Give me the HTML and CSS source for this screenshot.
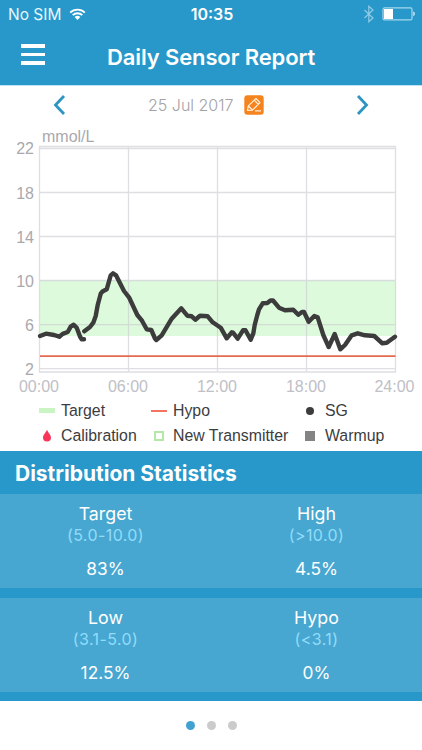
FILE: index.html
```html
<!DOCTYPE html>
<html lang="en">
<head>
  <meta charset="UTF-8">
  <title>Daily Sensor Report</title>
  <link rel="stylesheet" href="styles.css">
</head>
<body>
<header class="header">
  <div class="status">
    <span class="carrier">No SIM
      <svg class="wifi" width="17" height="13" viewBox="0 0 17 13">
        <path d="M1.2 4.6a10.4 10.4 0 0 1 14.6 0M3.7 7.2a6.8 6.8 0 0 1 9.6 0" fill="none" stroke="#fff" stroke-width="1.9"/>
        <path d="M5.6 9.1a4.1 4.1 0 0 1 5.8 0L8.5 12z" fill="#fff"/>
      </svg>
    </span>
    <span class="time">10:35</span>
    <span class="power">
      <svg width="12" height="18" viewBox="0 0 12 18">
        <path d="M1.5 5l8.5 8-4.2 3.8V1.2L10 5l-8.5 8" fill="none" stroke="#8fcbe6" stroke-width="1.2"/>
      </svg>
      <svg width="34" height="14" viewBox="0 0 34 14">
        <rect x="1" y=".9" width="29" height="12" rx="1.5" fill="none" stroke="#a5d8ee" stroke-width="1.2"/>
        <rect x="2" y="2" width="9" height="10" fill="#fff"/>
        <path d="M31.3 4.6c2 .4 2 4.2 0 4.6z" fill="#d5eef8"/>
      </svg>
    </span>
  </div>
  <div class="nav">
    <div class="menu"><i></i><i></i><i></i></div>
    <h1>Daily Sensor Report</h1>
  </div>
</header>

<div class="date">
  <svg width="14" height="22" viewBox="0 0 14 22"><path d="M12 2L3.5 11l8.5 9" fill="none" stroke="#2e94c2" stroke-width="2.8"/></svg>
  <p>
    <span>25 Jul 2017</span>
    <svg width="20" height="20" viewBox="0 0 20 20">
      <rect x=".3" y=".3" width="19.4" height="19.4" rx="3" fill="#f5841f"/>
      <path d="M3.5 15.5l.8-4.6L12 3.5l4 4.2-7.5 7.5zM4.4 11l4 4M10.3 5.2l4 4.1M11 15.8h6" fill="none" stroke="#ffeed8" stroke-width="1.2" stroke-linejoin="round"/>
    </svg>
  </p>
  <svg width="14" height="22" viewBox="0 0 14 22"><path d="M2 2l8.5 9L2 20" fill="none" stroke="#2e94c2" stroke-width="2.8"/></svg>
</div>

<svg class="chart" width="422" height="275" viewBox="0 123 422 275">
  <!-- target range -->
  <rect x="40" y="280.5" width="355.5" height="55.5" fill="#defadc"/>
  <g class="grid">
    <path d="M39.5 146.5h356v225.5h-356zM40 148.5h355M40 192.5h355M40 236.5h355M40 280.5h355M40 324.6h355M40 368.7h355M128.5 147v225M217.5 147v225M306.5 147v225"/>
  </g>
  <g class="y-label">
    <text x="34" y="154">22</text>
    <text x="34" y="198.5">18</text>
    <text x="34" y="242.5">14</text>
    <text x="34" y="286.5">10</text>
    <text x="34" y="330.5">6</text>
    <text x="34" y="374.5">2</text>
  </g>
  <text class="unit" x="42" y="142">mmol/L</text>
  <g class="x-label">
    <text x="39" y="392">00:00</text>
    <text x="128" y="392">06:00</text>
    <text x="217" y="392">12:00</text>
    <text x="306" y="392">18:00</text>
    <text x="394.5" y="392">24:00</text>
  </g>
  <path d="M40 356.2h355.5" stroke="#e4694f" stroke-width="1.8"/>
  <!-- sensor glucose -->
  <g class="sg">
    <path d="M40 336L46 333.7 54 335 59.3 336.7 62.7 333.9 67.7 332 70.7 326.7 73.7 324.7 76.7 327.7 80 336.5 81.7 339.3H84"/>
    <path d="M84.3 331.3L90 327 93.3 322.7 95.7 316 97.7 305 100.7 293.7 102.5 291.5 106.7 289.3 110.7 275.3 113 273.3 116 275.3 124 291 129 297.3 137.3 315 142 320.7 146.7 329.3 151.3 330 155 338.5 156.3 340 161.7 335.3 171.7 318.7 181.3 308.3 187.3 315.7 191.7 316.3 195.3 319.7 200 315.7 207.7 316.3 212.7 322.3 220.7 327.7 226.7 338.3 231.7 332.3 233 332.7 237.7 338.7 243 330.3 245.5 330.3 250.7 339.7 253.3 333.3 254.7 325 257.3 315 259 309.3 262.7 303.3 267.3 303 270.5 300.5 273 300.5 279 307.7 285 310.3 293.3 309.7 298.3 314.7 302 312 304 312 308.7 321.7 314.3 316 317.7 317.3 323.3 335 328.7 347 334.7 334 340.3 349.3 345 345 351.7 335.3 357.7 333.3 365 335.3 374.3 336 382.3 343.3 386.7 342.7 395 336.7"/>
  </g>
</svg>

<ul class="legend">
  <li><i class="mark target"></i>Target</li>
  <li><i class="mark hypo"></i>Hypo</li>
  <li><i class="mark dot"></i>SG</li>
  <li>
    <svg class="mark drop" width="8" height="13" viewBox="0 0 8 13"><path d="M4 .5C4.6 3 8 5.8 8 8.6a4 4 0 0 1-8 0C0 5.8 3.4 3 4 .5z" fill="#f8365a"/></svg>
    Calibration
  </li>
  <li><i class="mark transmitter"></i>New Transmitter</li>
  <li><i class="mark warmup"></i>Warmup</li>
</ul>

<section class="stats">
  <h2>Distribution Statistics</h2>
  <div class="row">
    <div class="cell"><h3>Target</h3><small>(5.0-10.0)</small><b>83%</b></div>
    <div class="cell"><h3>High</h3><small>(&gt;10.0)</small><b>4.5%</b></div>
  </div>
  <div class="row">
    <div class="cell"><h3>Low</h3><small>(3.1-5.0)</small><b>12.5%</b></div>
    <div class="cell"><h3>Hypo</h3><small>(&lt;3.1)</small><b>0%</b></div>
  </div>
</section>

<div class="pager"><i class="on"></i><i></i><i></i></div>
</body>
</html>
```
FILE: styles.css
```css
*{
    margin: 0;
    padding: 0;
    box-sizing: border-box;
}
body{
    width: 422px;
    height: 750px;
    overflow: hidden;
    background: #fff;
    font-family: Inter, sans-serif;
}
svg{
    display: block;
    flex-shrink: 0;
}
.header{
    height: 85px;
    background: #2798c9;
    color: #fff;
}
.status{
    height: 28px;
    display: grid;
    grid-template-columns: 1fr auto 1fr;
    align-items: center;
    padding: 0 6px 0 8px;
    font-size: 15.5px;
}
.carrier{
    display: flex;
    align-items: center;
    gap: 8px;
    color: #e6f6fc;
}
.time{
    font-weight: 600;
    font-size: 16px;
}
.power{
    display: flex;
    align-items: center;
    justify-content: flex-end;
    gap: 7px;
}
.nav{
    height: 57px;
    display: flex;
    align-items: center;
    padding-left: 21px;
}
.menu{
    width: 24px;
    display: flex;
    flex-direction: column;
    gap: 5px;
    margin: -4px 62px 0 0;
}
.menu i{
    height: 3.5px;
    background: #fff;
}
.nav h1{
    font-size: 22px;
    font-weight: 600;
    line-height: 56px;
    letter-spacing: -.12px;
    white-space: nowrap;
}
.date{
    height: 38px;
    display: flex;
    align-items: center;
    padding: 0 52px;
    border-top: 1px solid #bfe3f2;
}
.date p{
    width: 116px;
    display: flex;
    align-items: center;
    justify-content: space-between;
    margin: 0 auto 0 82px;
    font-size: 16px;
    font-weight: 300;
    color: #a3a3a6;
    white-space: nowrap;
}
.chart text{
    font: 16px "Liberation Sans", sans-serif;
    fill: #a9a9ad;
}
.chart .y-label text{
    text-anchor: end;
}
.chart .x-label text{
    text-anchor: middle;
    fill: #c0c0c6;
}
.grid path{
    fill: none;
    stroke: #c8c8d0;
    stroke-opacity: .6;
    stroke-width: 1.3;
}
.sg path{
    fill: none;
    stroke: #3c3c3c;
    stroke-width: 4.4;
    stroke-linecap: round;
    stroke-linejoin: round;
}
.legend{
    height: 53px;
    padding-left: 39px;
    display: grid;
    grid-template-columns: 112px 152px 1fr;
    grid-template-rows: 25px 25px;
    list-style: none;
    font: 15.85px "Liberation Sans", sans-serif;
    color: #3c3c3f;
}
.legend li{
    display: flex;
    align-items: center;
    white-space: nowrap;
}
.mark{
    flex-shrink: 0;
}
.target{
    width: 16px;
    height: 5px;
    margin-right: 6px;
    background: #c9f5c4;
}
.hypo{
    width: 16px;
    height: 2px;
    margin-right: 6px;
    background: #f07563;
}
.dot{
    width: 8px;
    height: 8px;
    margin: 0 11px 0 3px;
    border-radius: 50%;
    background: #3c3c3c;
}
.drop{
    margin: 0 10px 0 4px;
}
.transmitter{
    width: 10px;
    height: 10px;
    margin: 0 9px 0 3px;
    border: 2.5px solid #b5e8a8;
}
.warmup{
    width: 10px;
    height: 10px;
    margin: 0 10px 0 2px;
    background: #848484;
}
.stats{
    height: 250px;
    background: #2798c9;
    color: #fff;
}
.stats h2{
    height: 43px;
    padding-left: 15px;
    font-size: 21px;
    font-weight: 700;
    line-height: 46px;
}
.row{
    height: 94px;
    margin-bottom: 10px;
    padding-top: 8px;
    display: grid;
    grid-template-columns: 1fr 1fr;
    background: #48a7d0;
}
.cell{
    display: flex;
    flex-direction: column;
    align-items: center;
}
.cell h3{
    font-size: 17.8px;
    font-weight: 400;
    line-height: 23px;
}
.cell small{
    font-size: 16px;
    line-height: 20px;
    letter-spacing: .4px;
    color: #91dcfb;
}
.cell b{
    margin-top: 12px;
    font-size: 17.3px;
    font-weight: 400;
    line-height: 24px;
}
.pager{
    height: 49px;
    display: flex;
    justify-content: center;
    align-items: center;
    gap: 12px;
}
.pager i{
    width: 9px;
    height: 9px;
    border-radius: 50%;
    background: #cbcbcb;
}
.pager .on{
    background: #41a2d2;
}
```
